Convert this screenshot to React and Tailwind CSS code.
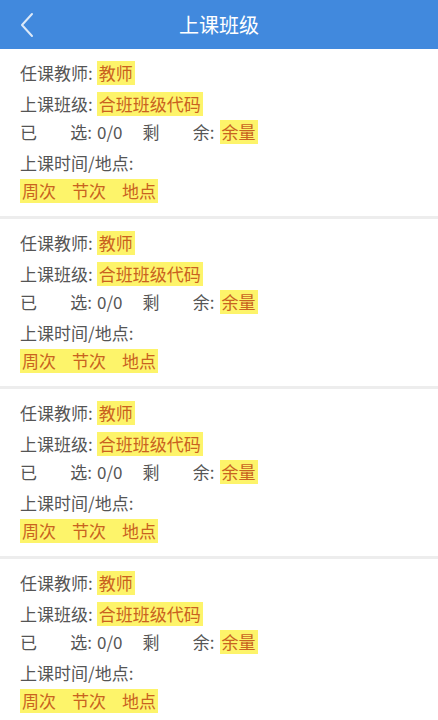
import React from 'react';

const font = { fontFamily: '"Noto Sans CJK SC", "Noto Sans", sans-serif' };

// yellow marker used for the placeholder values
function Mark({ children, className = '' }) {
  return (
    <span className={`bg-[#fdf46a] text-[#c9621f] px-[2px] leading-[24px] h-[24px] ${className}`}>
      {children}
    </span>
  );
}

function ClassCard({ last }) {
  return (
    <div className={`pl-[20px] pt-[12px] pb-[13px] ${last ? '' : 'border-b-[3px] border-[#ededed]'}`}>
      <div className="flex items-center h-[24px]">
        <span>任课教师:</span>
        <Mark className="ml-[4px] inline-block">教师</Mark>
      </div>
      <div className="flex items-center h-[24px] mt-[7px]">
        <span>上课班级:</span>
        <Mark className="ml-[4px] inline-block">合班班级代码</Mark>
      </div>
      <div className="flex items-center h-[24px] mt-[4px]">
        <span className="w-[72px] flex justify-between">
          <span>已</span>
          <span>选:</span>
        </span>
        <span className="ml-[5px]">0/0</span>
        <span className="ml-[20px] w-[72px] flex justify-between">
          <span>剩</span>
          <span>余:</span>
        </span>
        <Mark className="ml-[5px] inline-block">余量</Mark>
      </div>
      <div className="flex items-center h-[24px] mt-[7px]">
        <span>上课时间/地点:</span>
      </div>
      <div className="flex items-center h-[24px] mt-[4px]">
        <Mark className="flex gap-[16px]">
          <span>周次</span>
          <span>节次</span>
          <span>地点</span>
        </Mark>
      </div>
    </div>
  );
}

export default function App() {
  return (
    <div className="w-[438px] h-[720px] bg-white overflow-hidden text-[17px] text-[#555]" style={font}>
      {/* top bar */}
      <div className="h-[49px] bg-[#4189dd] flex items-center relative">
        <svg className="ml-[18px]" width="18" height="28" viewBox="0 0 18 28" fill="none">
          <path d="M14 3 L4 14 L14 25" stroke="#dce9f8" strokeWidth="2" strokeLinecap="round" strokeLinejoin="round" />
        </svg>
        <div className="absolute left-0 right-0 text-center text-white text-[20px] pointer-events-none">上课班级</div>
      </div>

      <ClassCard />
      <ClassCard />
      <ClassCard />
      <ClassCard last />
    </div>
  );
}
